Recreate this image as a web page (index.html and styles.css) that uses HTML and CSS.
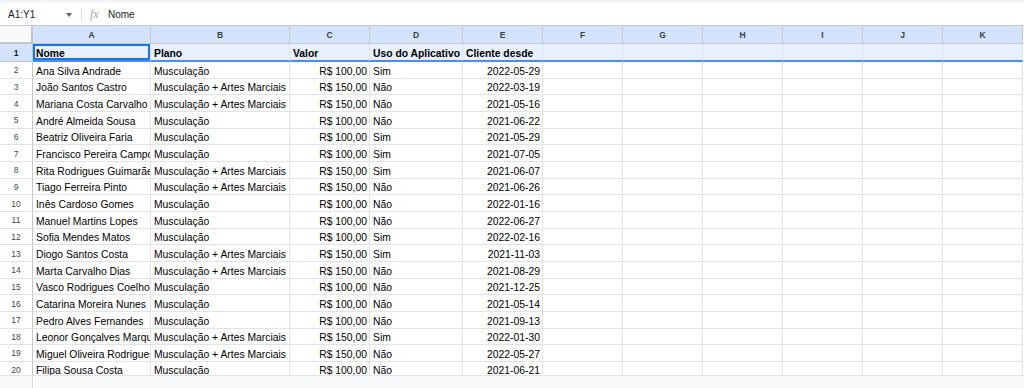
FILE: index.html
```html
<!DOCTYPE html>
<html lang="pt">
<head>
<meta charset="utf-8">
<title>Planilha</title>
<link rel="stylesheet" href="styles.css">
</head>
<body>
<div class="topstrip"></div>
<div class="fbar">
  <div class="namebox">A1:Y1</div>
  <div class="caret"></div>
  <div class="sep"></div>
  <div class="fx">fx</div>
  <div class="formula">Nome</div>
</div>
<div class="viewport">
<div class="sheet">
  <div class="corner"></div>
  <div class="ch">A</div><div class="ch">B</div><div class="ch">C</div><div class="ch">D</div><div class="ch">E</div><div class="ch">F</div><div class="ch">G</div><div class="ch">H</div><div class="ch">I</div><div class="ch">J</div><div class="ch">K</div>

  <div class="rh sel">1</div>
  <div class="c h active">Nome</div><div class="c h">Plano</div><div class="c h">Valor</div><div class="c h">Uso do Aplicativo</div><div class="c h">Cliente desde</div><div class="c h"></div><div class="c h"></div><div class="c h"></div><div class="c h"></div><div class="c h"></div><div class="c h"></div>

  <div class="rh">2</div>
  <div class="c">Ana Silva Andrade</div><div class="c">Musculação</div><div class="c r">R$ 100,00</div><div class="c">Sim</div><div class="c r">2022-05-29</div><div class="c"></div><div class="c"></div><div class="c"></div><div class="c"></div><div class="c"></div><div class="c"></div>

  <div class="rh">3</div>
  <div class="c">João Santos Castro</div><div class="c">Musculação + Artes Marciais</div><div class="c r">R$ 150,00</div><div class="c">Não</div><div class="c r">2022-03-19</div><div class="c"></div><div class="c"></div><div class="c"></div><div class="c"></div><div class="c"></div><div class="c"></div>

  <div class="rh">4</div>
  <div class="c">Mariana Costa Carvalho</div><div class="c">Musculação + Artes Marciais</div><div class="c r">R$ 150,00</div><div class="c">Não</div><div class="c r">2021-05-16</div><div class="c"></div><div class="c"></div><div class="c"></div><div class="c"></div><div class="c"></div><div class="c"></div>

  <div class="rh">5</div>
  <div class="c">André Almeida Sousa</div><div class="c">Musculação</div><div class="c r">R$ 100,00</div><div class="c">Não</div><div class="c r">2021-06-22</div><div class="c"></div><div class="c"></div><div class="c"></div><div class="c"></div><div class="c"></div><div class="c"></div>

  <div class="rh">6</div>
  <div class="c">Beatriz Oliveira Faria</div><div class="c">Musculação</div><div class="c r">R$ 100,00</div><div class="c">Sim</div><div class="c r">2021-05-29</div><div class="c"></div><div class="c"></div><div class="c"></div><div class="c"></div><div class="c"></div><div class="c"></div>

  <div class="rh">7</div>
  <div class="c">Francisco Pereira Campos</div><div class="c">Musculação</div><div class="c r">R$ 100,00</div><div class="c">Sim</div><div class="c r">2021-07-05</div><div class="c"></div><div class="c"></div><div class="c"></div><div class="c"></div><div class="c"></div><div class="c"></div>

  <div class="rh">8</div>
  <div class="c">Rita Rodrigues Guimarães</div><div class="c">Musculação + Artes Marciais</div><div class="c r">R$ 150,00</div><div class="c">Sim</div><div class="c r">2021-06-07</div><div class="c"></div><div class="c"></div><div class="c"></div><div class="c"></div><div class="c"></div><div class="c"></div>

  <div class="rh">9</div>
  <div class="c">Tiago Ferreira Pinto</div><div class="c">Musculação + Artes Marciais</div><div class="c r">R$ 150,00</div><div class="c">Não</div><div class="c r">2021-06-26</div><div class="c"></div><div class="c"></div><div class="c"></div><div class="c"></div><div class="c"></div><div class="c"></div>

  <div class="rh">10</div>
  <div class="c">Inês Cardoso Gomes</div><div class="c">Musculação</div><div class="c r">R$ 100,00</div><div class="c">Não</div><div class="c r">2022-01-16</div><div class="c"></div><div class="c"></div><div class="c"></div><div class="c"></div><div class="c"></div><div class="c"></div>

  <div class="rh">11</div>
  <div class="c">Manuel Martins Lopes</div><div class="c">Musculação</div><div class="c r">R$ 100,00</div><div class="c">Não</div><div class="c r">2022-06-27</div><div class="c"></div><div class="c"></div><div class="c"></div><div class="c"></div><div class="c"></div><div class="c"></div>

  <div class="rh">12</div>
  <div class="c">Sofia Mendes Matos</div><div class="c">Musculação</div><div class="c r">R$ 100,00</div><div class="c">Sim</div><div class="c r">2022-02-16</div><div class="c"></div><div class="c"></div><div class="c"></div><div class="c"></div><div class="c"></div><div class="c"></div>

  <div class="rh">13</div>
  <div class="c">Diogo Santos Costa</div><div class="c">Musculação + Artes Marciais</div><div class="c r">R$ 150,00</div><div class="c">Sim</div><div class="c r">2021-11-03</div><div class="c"></div><div class="c"></div><div class="c"></div><div class="c"></div><div class="c"></div><div class="c"></div>

  <div class="rh">14</div>
  <div class="c">Marta Carvalho Dias</div><div class="c">Musculação + Artes Marciais</div><div class="c r">R$ 150,00</div><div class="c">Não</div><div class="c r">2021-08-29</div><div class="c"></div><div class="c"></div><div class="c"></div><div class="c"></div><div class="c"></div><div class="c"></div>

  <div class="rh">15</div>
  <div class="c">Vasco Rodrigues Coelho</div><div class="c">Musculação</div><div class="c r">R$ 100,00</div><div class="c">Não</div><div class="c r">2021-12-25</div><div class="c"></div><div class="c"></div><div class="c"></div><div class="c"></div><div class="c"></div><div class="c"></div>

  <div class="rh">16</div>
  <div class="c">Catarina Moreira Nunes</div><div class="c">Musculação</div><div class="c r">R$ 100,00</div><div class="c">Não</div><div class="c r">2021-05-14</div><div class="c"></div><div class="c"></div><div class="c"></div><div class="c"></div><div class="c"></div><div class="c"></div>

  <div class="rh">17</div>
  <div class="c">Pedro Alves Fernandes</div><div class="c">Musculação</div><div class="c r">R$ 100,00</div><div class="c">Não</div><div class="c r">2021-09-13</div><div class="c"></div><div class="c"></div><div class="c"></div><div class="c"></div><div class="c"></div><div class="c"></div>

  <div class="rh">18</div>
  <div class="c">Leonor Gonçalves Marques</div><div class="c">Musculação + Artes Marciais</div><div class="c r">R$ 150,00</div><div class="c">Sim</div><div class="c r">2022-01-30</div><div class="c"></div><div class="c"></div><div class="c"></div><div class="c"></div><div class="c"></div><div class="c"></div>

  <div class="rh">19</div>
  <div class="c">Miguel Oliveira Rodrigues</div><div class="c">Musculação + Artes Marciais</div><div class="c r">R$ 150,00</div><div class="c">Não</div><div class="c r">2022-05-27</div><div class="c"></div><div class="c"></div><div class="c"></div><div class="c"></div><div class="c"></div><div class="c"></div>

  <div class="rh">20</div>
  <div class="c">Filipa Sousa Costa</div><div class="c">Musculação</div><div class="c r">R$ 100,00</div><div class="c">Não</div><div class="c r">2021-06-21</div><div class="c"></div><div class="c"></div><div class="c"></div><div class="c"></div><div class="c"></div><div class="c"></div>
</div>
</div>
<div class="bottom"><div class="bottom-rh"></div></div>
</body>
</html>
```
FILE: styles.css
```css
* { box-sizing: border-box; }
html, body { margin: 0; padding: 0; }
body {
  width: 1024px;
  height: 388px;
  overflow: hidden;
  background: #ffffff;
  font-family: "Liberation Sans", Arial, sans-serif;
  color: #000;
}
.topstrip { height: 3px; background: #f0f3f8; }
.fbar {
  height: 23px;
  padding-top: 1px;
  display: flex;
  align-items: center;
  border-bottom: 1px solid #c7c7c7;
  font-size: 10px;
  color: #202124;
}
.namebox { width: 66px; padding-left: 8px; }
.caret {
  width: 0; height: 0;
  border-left: 3.5px solid transparent;
  border-right: 3.5px solid transparent;
  border-top: 4px solid #5f6368;
}
.sep { width: 1px; height: 13px; background: #dadce0; margin-left: 9px; }
.fx {
  margin-left: 8px;
  font-family: "Liberation Serif", serif;
  font-style: italic;
  font-size: 12px;
  color: #a0a4a8;
  width: 18px;
}
.formula { color: #202124; }

.viewport {
  height: 349px;
  overflow: hidden;
}
.sheet {
  display: grid;
  grid-template-columns: 33px 118px 139px 80px 93px 80px repeat(6, 80px);
  grid-template-rows: 18px 18px repeat(19, 16.67px);
}
.corner {
  background: #f8f9fa;
  border-right: 2px solid #c4c7c5;
  border-bottom: 2px solid #c4c7c5;
}
.ch {
  background: #d3e3fd;
  border-right: 1px solid #c4c7c5;
  border-bottom: 1px solid #c4c7c5;
  font-size: 8.5px;
  font-weight: bold;
  color: #3c4043;
  display: flex;
  align-items: center;
  justify-content: center;
  padding-top: 1px;
}
.rh {
  background: #ffffff;
  border-right: 1px solid #c4c7c5;
  border-bottom: 1px solid #e1e1e1;
  font-size: 8.5px;
  color: #444746;
  display: flex;
  align-items: center;
  justify-content: center;
  padding-top: 1px;
}
.rh.sel {
  background: #d3e3fd;
  color: #041e49;
  font-weight: bold;
  border-bottom: 1px solid #c4c7c5;
}
.c {
  border-right: 1px solid #e2e3e3;
  border-bottom: 1px solid #e2e3e3;
  font-size: 10.35px;
  line-height: 12px;
  padding: 0 2px 0 3px;
  display: flex;
  align-items: flex-end;
  white-space: nowrap;
  overflow: hidden;
}
.c.r { justify-content: flex-end; padding-right: 2px; }
.c.h {
  background: #e8f0fe;
  font-weight: bold;
  border-right-color: #dbe4f4;
  border-bottom: 2px solid #4d8cf0;
  padding-bottom: 0;
}
.c.active {
  box-shadow: inset 0 0 0 2px #1a73e8;
}
.bottom {
  height: 13px;
  background: #f8f9fa;
  border-top: 1px solid #e2e3e3;
  display: flex;
}
.bottom-rh { width: 33px; border-right: 1px solid #dadce0; }
```
